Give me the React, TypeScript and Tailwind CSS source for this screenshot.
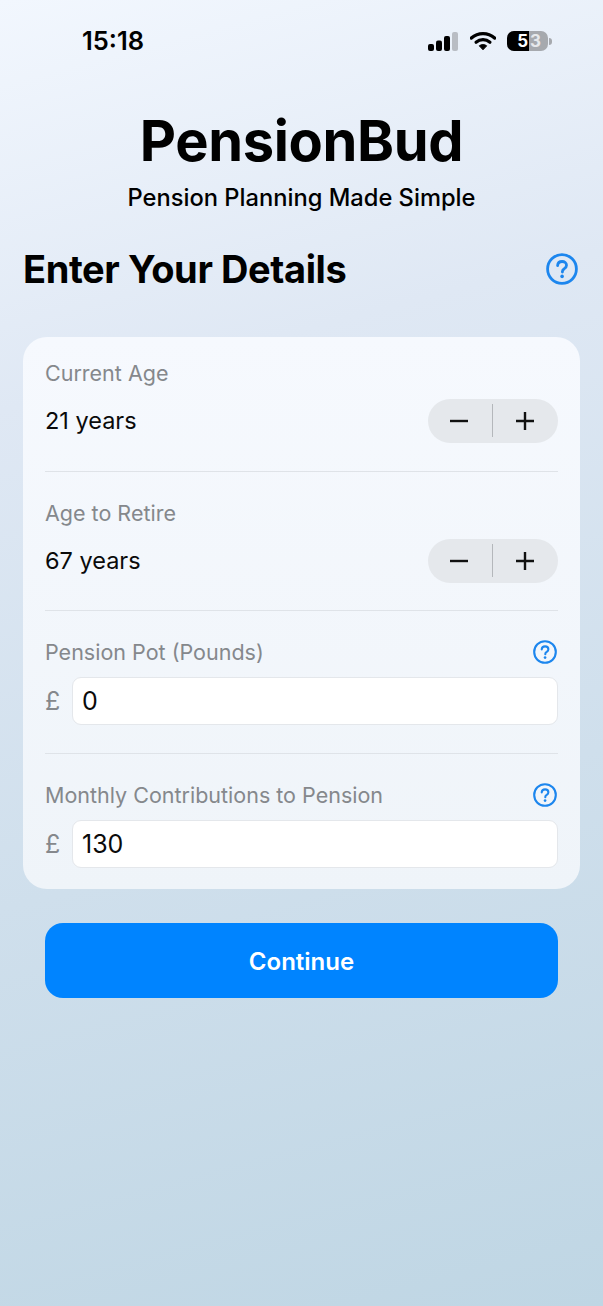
import React from "react";

const HelpIcon = ({ big }: { big?: boolean }) => (
  <svg viewBox="0 0 32 32" className={big ? "h-8 w-8" : "h-6 w-6"} fill="none">
    <circle cx="16" cy="16" r="14.4" stroke="#1c86ee" strokeWidth="2.8" />
    <path
      d="M11.6 12.6c.2-2.6 2.1-4.1 4.5-4.1 2.5 0 4.4 1.5 4.4 3.7 0 1.7-.9 2.6-2.2 3.5-1.3.8-1.9 1.5-1.9 2.9v.4"
      stroke="#1c86ee"
      strokeWidth="2.8"
      strokeLinecap="round"
    />
    <circle cx="16.1" cy="23.4" r="1.8" fill="#1c86ee" />
  </svg>
);

const Stepper = () => (
  <div className="flex h-[44px] w-[130px] items-center rounded-full bg-[#e5e8ec]">
    <div className="flex w-[64px] items-center justify-center pr-[2px]">
      <svg viewBox="0 0 20 20" className="h-5 w-5">
        <path d="M1 10h18" stroke="#111" strokeWidth="2.4" />
      </svg>
    </div>
    <div className="h-[33px] w-px bg-[#b4b7bb]" />
    <div className="flex flex-1 items-center justify-center pr-[2px]">
      <svg viewBox="0 0 20 20" className="h-5 w-5">
        <path d="M1 10h18M10 1v18" stroke="#111" strokeWidth="2.4" />
      </svg>
    </div>
  </div>
);

const StepRow = ({ label, value, first }: { label: string; value: string; first?: boolean }) => (
  <div className={first ? "h-[135px] border-b border-[#dfe3e8] pt-[22px]" : "h-[139px] border-b border-[#dfe3e8] pt-[27px]"}>
    <div className="text-[21.5px] leading-[28px] text-[#85888c]">{label}</div>
    <div className="mt-[11.5px] flex items-center justify-between">
      <span className="text-[23.5px] leading-[44px] text-[#0a0a0a]">{value}</span>
      <Stepper />
    </div>
  </div>
);

const MoneyRow = ({ label, value, last }: { label: string; value: string; last?: boolean }) => (
  <div className={last ? "pt-[27px]" : "h-[143px] border-b border-[#dfe3e8] pt-[27px]"}>
    <div className="flex h-[28px] items-center justify-between">
      <span className="text-[21.5px] leading-[28px] text-[#85888c]">{label}</span>
      <span className="mr-[1px]">
        <HelpIcon />
      </span>
    </div>
    <div className="mt-[11px] flex items-center gap-[11px]">
      <span className="w-[16px] text-[25px] leading-none text-[#85888c]">£</span>
      <div className="flex h-[48px] flex-1 items-center rounded-[9px] border border-[#e4e7eb] bg-white pl-[9px] pt-[2px] text-[25px] text-[#0a0a0a]">
        {value}
      </div>
    </div>
  </div>
);

export default function App() {
  return (
    <div
      className="flex h-[1306px] w-[603px] flex-col overflow-hidden bg-[linear-gradient(165deg,#f2f7fe_0%,#dfe8f4_28%,#cfdfec_62%,#bfd6e4_100%)] text-black"
      style={{ fontFamily: "Inter, 'Noto Sans', sans-serif" }}
    >
      <div className="flex h-[82px] items-center justify-between pl-[82px] pr-[51px]">
        <span className="text-[25.5px] font-semibold leading-none">15:18</span>
        <div className="flex items-center gap-[11px]">
          <svg viewBox="0 0 32 20" className="h-[20px] w-[32px]">
            <rect x="1" y="13" width="6" height="7" rx="2" fill="#000" />
            <rect x="9" y="9.5" width="6" height="10.5" rx="2" fill="#000" />
            <rect x="17" y="5" width="6" height="15" rx="2" fill="#000" />
            <rect x="25" y="1" width="6" height="19" rx="2" fill="#b9bdc4" />
          </svg>
          <svg viewBox="0 0 28 20" className="h-[20px] w-[26px]">
            <path d="M1.5 6.8C8.7.4 19.3.4 26.5 6.8" stroke="#000" strokeWidth="3.6" fill="none" strokeLinecap="round" />
            <path d="M6.5 11.4c4.4-3.8 10.6-3.8 15 0" stroke="#000" strokeWidth="3.4" fill="none" strokeLinecap="round" />
            <path d="M14 19.5l-4-4.3c2.3-1.8 5.7-1.8 8 0z" fill="#000" stroke="#000" strokeLinejoin="round" />
          </svg>
          <div className="flex h-[20px] w-[41px] overflow-hidden rounded-[7px] bg-[#a6a9ae] text-[17px] font-bold leading-[20px]">
            <div className="flex w-[22px] justify-end bg-black pr-[1px] text-white">5</div>
            <div className="pl-[1px] text-[#e6e8eb]">3</div>
          </div>
          <div className="-ml-[10px] h-[7px] w-[3px] rounded-r-full bg-[#a6a9ae]" />
        </div>
      </div>
      <h1 className="mt-[25px] text-center text-[56px] font-bold leading-[68px] tracking-[-0.35px]">PensionBud</h1>
      <p className="mt-[7px] text-center text-[23.7px] font-medium leading-[32px]">Pension Planning Made Simple</p>
      <div className="mt-[31px] flex items-center justify-between pl-[23px] pr-[25px]">
        <h2 className="text-[38px] font-bold leading-[48px] tracking-[-0.4px]">Enter Your Details</h2>
        <HelpIcon big />
      </div>
      <div className="mx-[23px] mt-[44px] h-[552px] rounded-[24px] bg-[linear-gradient(180deg,#f6f9fe,#eff4f9)] px-[22px]">
        <StepRow first label="Current Age" value="21 years" />
        <StepRow label="Age to Retire" value="67 years" />
        <MoneyRow label="Pension Pot (Pounds)" value="0" />
        <MoneyRow label="Monthly Contributions to Pension" value="130" last />
      </div>
      <button className="mx-[45px] mt-[34px] flex h-[75px] items-center justify-center rounded-[18px] bg-[#0084ff] pt-[2px] text-[24px] font-semibold text-white">
        Continue
      </button>
    </div>
  );
}
